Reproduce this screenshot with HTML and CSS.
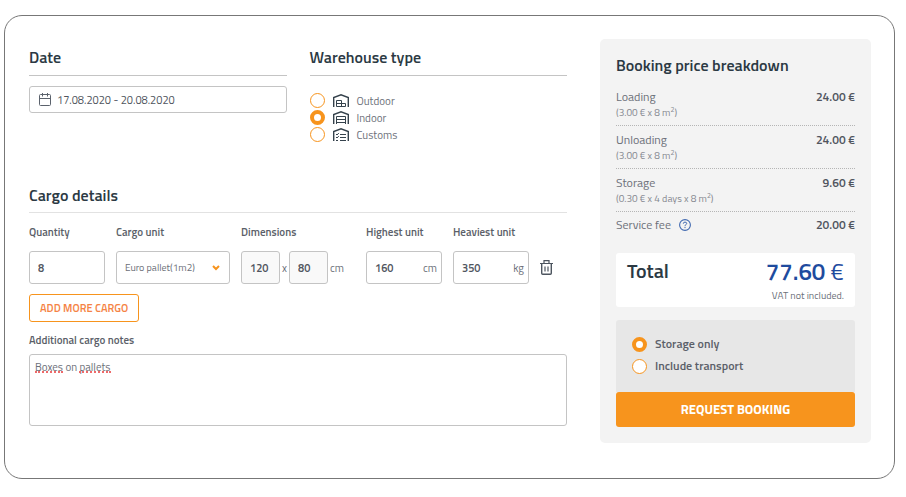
FILE: index.html
```html
<!DOCTYPE html>
<html lang="en">
<head>
    <meta charset="UTF-8">
    <meta name="viewport" content="width=device-width, initial-scale=1.0">
    <title>Warehouse booking</title>
    <link rel="stylesheet" href="styles.css">
</head>
<body>
    <form class="booking">
        <main class="details">
            <div class="top-row">
                <section>
                    <h2><label for="date">Date</label></h2>
                    <div class="field date-field">
                        <svg width="12" height="13" viewBox="0 0 12 13" fill="none" stroke="#5b626c">
                            <rect x="0.5" y="1.5" width="11" height="11" rx="1"/>
                            <path d="M0.5 5.5h11M3.5 0v3.5M8.5 0v3.5"/>
                        </svg>
                        <input type="text" id="date" value="17.08.2020 - 20.08.2020">
                    </div>
                </section>

                <section>
                    <h2>Warehouse type</h2>
                    <div class="type-list">
                        <label class="option">
                            <input type="radio" name="type" value="outdoor">
                            <svg width="16" height="13" viewBox="0 0 16 13" fill="none" stroke="#35424c">
                                <path d="M0.7 13V3.5L8 0.8l7.3 2.7V13" stroke-width="1.4"/>
                                <path d="M3.5 12.5v-6h5v6M3.5 9.5h9v3h-9"/>
                            </svg>
                            <span>Outdoor</span>
                        </label>
                        <label class="option">
                            <input type="radio" name="type" value="indoor" checked>
                            <svg width="16" height="13" viewBox="0 0 16 13" fill="none" stroke="#35424c">
                                <path d="M0.7 13V3.5L8 0.8l7.3 2.7V13" stroke-width="1.4"/>
                                <path d="M3.5 13V5.5h9V13M3.5 8.5h9M3.5 11.5h9"/>
                            </svg>
                            <span>Indoor</span>
                        </label>
                        <label class="option">
                            <input type="radio" name="type" value="customs">
                            <svg width="16" height="13" viewBox="0 0 16 13" fill="none" stroke="#35424c">
                                <path d="M0.7 13V3.5L8 0.8l7.3 2.7V13" stroke-width="1.4"/>
                                <path d="M7 6.5h6M7 9.5h6M7 12.5h6"/>
                                <path d="M3 6l1 1 1.8-1.9M3 9l1 1 1.8-1.9M3 12.5h2"/>
                            </svg>
                            <span>Customs</span>
                        </label>
                    </div>
                </section>
            </div>

            <section>
                <h2 class="light-line">Cargo details</h2>
                <div class="cargo-row">
                    <div class="cargo-col">
                        <label class="caption" for="quantity">Quantity</label>
                        <div class="field">
                            <input type="text" id="quantity" value="8">
                        </div>
                    </div>
                    <div class="cargo-col">
                        <label class="caption" for="unit">Cargo unit</label>
                        <div class="field select-field">
                            <select id="unit">
                                <option>Euro pallet(1m2)</option>
                            </select>
                            <svg class="chevron" width="8" height="6" viewBox="0 0 8 6" fill="none" stroke="#f7941d" stroke-width="2">
                                <path d="M1 1l3 3 3-3"/>
                            </svg>
                        </div>
                    </div>
                    <div class="cargo-col">
                        <label class="caption" for="length">Dimensions</label>
                        <div class="dimensions">
                            <div class="field locked">
                                <input type="text" id="length" value="120" readonly>
                            </div>
                            <span>x</span>
                            <div class="field locked">
                                <input type="text" aria-label="Width" value="80" readonly>
                            </div>
                            <span>cm</span>
                        </div>
                    </div>
                    <div class="cargo-col">
                        <label class="caption" for="highest">Highest unit</label>
                        <div class="field">
                            <input type="text" id="highest" value="160">
                            <span>cm</span>
                        </div>
                    </div>
                    <div class="cargo-col">
                        <label class="caption" for="heaviest">Heaviest unit</label>
                        <div class="field">
                            <input type="text" id="heaviest" value="350">
                            <span>kg</span>
                        </div>
                    </div>
                    <button type="button" class="remove" aria-label="Remove cargo">
                        <svg width="13" height="15" viewBox="0 0 13 15" fill="none" stroke="#4d555f">
                            <path d="M0 3.5h13M4 3.5V0.7h5v2.8" stroke-width="1.2"/>
                            <path d="M1.7 3.5v9.8q0 1 1 1h7.6q1 0 1-1V3.5" stroke-width="1.4"/>
                            <path d="M5 6.5v5M8 6.5v5" stroke-width="1.2"/>
                        </svg>
                    </button>
                </div>
                <button type="button" class="add-cargo">ADD MORE CARGO</button>
            </section>

            <section class="notes">
                <label class="caption" for="notes">Additional cargo notes</label>
                <div class="notes-box">
                    <textarea id="notes" spellcheck="false">Boxes on pallets</textarea>
                    <!-- spelling marks -->
                    <i class="typo typo-boxes"></i>
                    <i class="typo typo-pallets"></i>
                </div>
            </section>
        </main>

        <aside class="summary">
            <h2>Booking price breakdown</h2>
            <ul class="prices">
                <li>
                    <div>Loading <small>(3.00 € x 8 m<sup>2</sup>)</small></div>
                    <b>24.00 €</b>
                </li>
                <li>
                    <div>Unloading <small>(3.00 € x 8 m<sup>2</sup>)</small></div>
                    <b>24.00 €</b>
                </li>
                <li>
                    <div>Storage <small>(0.30 € x 4 days x 8 m<sup>2</sup>)</small></div>
                    <b>9.60 €</b>
                </li>
                <li>
                    <div class="fee">Service fee
                        <svg width="12" height="12" viewBox="0 0 12 12" fill="none" stroke="#4169b0">
                            <circle cx="6" cy="6" r="5.4" stroke-width="1.1"/>
                            <path d="M4.3 4.7q0-1.6 1.7-1.6t1.7 1.4q0 0.8-0.9 1.2T6 7.2M6 8v1.1"/>
                        </svg>
                    </div>
                    <b>20.00 €</b>
                </li>
            </ul>

            <div class="total">
                <h3>Total</h3>
                <div class="total-price"><strong>77.60</strong> €</div>
                <p>VAT not included.</p>
            </div>

            <div class="service">
                <label class="option">
                    <input type="radio" name="service" value="storage" checked>
                    <span>Storage only</span>
                </label>
                <label class="option">
                    <input type="radio" name="service" value="transport">
                    <span>Include transport</span>
                </label>
            </div>
            <button type="submit" class="request">REQUEST BOOKING</button>
        </aside>
    </form>
</body>
</html>
```
FILE: styles.css
```css
* {
    box-sizing: border-box;
}

body {
    margin: 0;
    padding: 15px 11px 18px 4px;
    background-color: #fff;
    color: #6c7079;
    font-family: "Titillium Web", Roboto, sans-serif;
    font-size: 11px;
    line-height: 16px;
}

input, select, textarea, button {
    font: inherit;
    color: inherit;
}

h2, h3 {
    margin: 0;
    color: #2b3943;
    font-weight: 600;
}

h2 {
    font-size: 16px;
    line-height: 22px;
}

.booking {
    display: grid;
    grid-template-columns: minmax(0, 1fr) 271px;
    gap: 33px;
    padding: 23px 23px 35px 24px;
    border: 1px solid #777;
    border-radius: 18px;
}

/* Left side */
.details h2 {
    padding: 7px 0;
    border-bottom: 1px solid #c4c4c4;
}

.details h2.light-line {
    padding: 0 0 6px;
    border-color: #e2e2e2;
}

.top-row {
    display: grid;
    grid-template-columns: 1fr 1fr;
    gap: 23px;
    margin-bottom: 41px;
}

.field {
    display: flex;
    align-items: center;
    height: 33px;
    padding: 0 4px 0 8px;
    border: 1px solid #c4c4c4;
    border-radius: 3px;
    background-color: #fff;
}

.field input {
    flex: 1;
    min-width: 0;
    width: 100%;
    padding: 0;
    border: none;
    outline: none;
    background: none;
    color: #50555e;
    font-weight: 600;
}

.date-field {
    gap: 6px;
    height: 27px;
    margin-top: 10px;
    padding-left: 9px;
}

.date-field input {
    font-weight: 400;
}

.type-list {
    padding-top: 16px;
}

.option {
    display: flex;
    align-items: center;
    gap: 8px;
    height: 17px;
}

.option input {
    appearance: none;
    width: 15px;
    height: 15px;
    margin: 0;
    border: 1px solid #f7941d;
    border-radius: 50%;
    background-color: #fff;
}

.option input:checked {
    border-width: 4px;
}

.cargo-row {
    display: grid;
    grid-template-columns: 76fr 114fr 114fr 76fr 76fr 27fr;
    gap: 11px;
    align-items: end;
    margin: 11px 0 10px;
}

.cargo-col {
    min-width: 0;
}

.caption {
    display: block;
    color: #5b5f69;
    font-weight: 600;
}

.cargo-col .caption {
    margin-bottom: 11px;
    white-space: nowrap;
}

.select-field {
    position: relative;
    padding: 0;
}

.select-field select {
    appearance: none;
    width: 100%;
    height: 100%;
    padding: 0 20px 0 8px;
    border: none;
    background: none;
    font-size: 10px;
}

.chevron {
    position: absolute;
    right: 9px;
    pointer-events: none;
}

.dimensions {
    display: flex;
    align-items: center;
    gap: 2px;
}

.dimensions .field {
    width: 39px;
    padding-right: 0;
}

.locked {
    background-color: #f9f9f9;
}

.remove {
    display: flex;
    align-items: center;
    height: 33px;
    padding: 0;
    border: none;
    background: none;
    cursor: pointer;
}

.add-cargo {
    height: 28px;
    padding: 0 10px;
    border: 1px solid #f7941d;
    border-radius: 3px;
    background-color: #fff;
    color: #f58345;
    font-weight: 600;
    cursor: pointer;
}

.notes {
    margin-top: 10px;
}

.notes-box {
    position: relative;
    margin-top: 6px;
}

.notes-box textarea {
    display: block;
    width: 100%;
    height: 72px;
    padding: 4px 5px;
    border: 1px solid #c4c4c4;
    border-radius: 3px;
    outline: none;
    resize: none;
}

.typo {
    position: absolute;
    top: 17px;
    border-bottom: 2px dotted #ee6a6a;
}

.typo-boxes {
    left: 6px;
    width: 28px;
}

.typo-pallets {
    left: 50px;
    width: 32px;
}

/* Price summary */
.summary {
    padding: 15px 16px 16px;
    border-radius: 5px;
    background-color: #f3f3f3;
}

.prices {
    margin: 7px 0 19px;
    padding: 0;
    list-style: none;
    font-size: 12px;
}

.prices li {
    display: flex;
    justify-content: space-between;
    padding: 6px 0 4px;
    border-bottom: 1px dotted #b5b5b5;
}

.prices li:last-child {
    padding: 5px 0 1px;
    border-bottom: none;
}

.prices b {
    color: #50555e;
    font-weight: 600;
}

.prices small {
    display: block;
    color: #858890;
    font-size: 10px;
}

.prices sup {
    font-size: 7px;
    line-height: 0;
}

.fee {
    display: flex;
    align-items: center;
    gap: 8px;
}

.total {
    display: grid;
    grid-template-columns: auto auto;
    justify-content: space-between;
    padding: 4px 11px 3px;
    border-radius: 3px;
    background-color: #fff;
}

.total h3 {
    font-size: 20px;
    line-height: 28px;
}

.total-price {
    color: #1e4b9e;
    font-size: 24px;
    line-height: 28px;
}

.total-price strong {
    font-weight: 600;
}

.total p {
    grid-column: 1 / 3;
    margin: 0;
    padding: 3px 0 0;
    font-size: 10px;
    text-align: right;
}

.service {
    margin-top: 13px;
    padding: 13px 16px 15px;
    border-radius: 3px 3px 0 0;
    background-color: #e7e7e7;
    color: #5b5f69;
    font-size: 12px;
    font-weight: 600;
}

.service .option {
    height: 22px;
}

.request {
    display: block;
    width: 100%;
    height: 35px;
    padding: 0 0 2px;
    border: none;
    border-radius: 3px;
    background-color: #f7941d;
    color: #fff;
    font-size: 13px;
    font-weight: 700;
    cursor: pointer;
}
```
